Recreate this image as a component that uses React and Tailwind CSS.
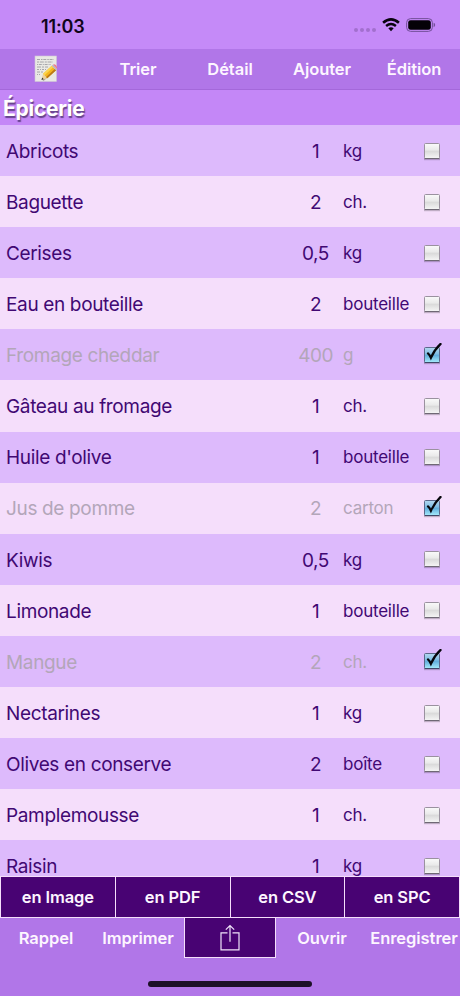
import React, { useState } from "react";

const startItems = [
  { name: "Abricots", qty: "1", unit: "kg", done: false },
  { name: "Baguette", qty: "2", unit: "ch.", done: false },
  { name: "Cerises", qty: "0,5", unit: "kg", done: false },
  { name: "Eau en bouteille", qty: "2", unit: "bouteille", done: false },
  { name: "Fromage cheddar", qty: "400", unit: "g", done: true },
  { name: "Gâteau au fromage", qty: "1", unit: "ch.", done: false },
  { name: "Huile d'olive", qty: "1", unit: "bouteille", done: false },
  { name: "Jus de pomme", qty: "2", unit: "carton", done: true },
  { name: "Kiwis", qty: "0,5", unit: "kg", done: false },
  { name: "Limonade", qty: "1", unit: "bouteille", done: false },
  { name: "Mangue", qty: "2", unit: "ch.", done: true },
  { name: "Nectarines", qty: "1", unit: "kg", done: false },
  { name: "Olives en conserve", qty: "2", unit: "boîte", done: false },
  { name: "Pamplemousse", qty: "1", unit: "ch.", done: false },
  { name: "Raisin", qty: "1", unit: "kg", done: false },
];

const NoteIcon = () => (
  <svg width="24" height="28" viewBox="0 0 24 28" fill="none">
    <rect x="1" y="1" width="21.5" height="25.5" fill="#e9e9e4" stroke="#cfc6d6" strokeWidth="0.6" />
    <g stroke="#96969a" strokeWidth="0.8">
      <path d="M3 4.5h17" strokeDasharray="3 1 1.5 .8" />
      <path d="M3 7h16" strokeDasharray="2 .8 4 1" />
      <path d="M3 9.5h14" strokeDasharray="1 .8 3 1" />
      <path d="M3 12h11" strokeDasharray="4 1 2 1" />
      <path d="M3 14.5h9" strokeDasharray="2 1 1 1" />
      <path d="M3 17h6" strokeDasharray="3 1" />
      <path d="M3 19.5h4" strokeDasharray="1 1" />
    </g>
    <path d="M9 25.5l13-11" stroke="#a9a59c" strokeWidth="1.5" />
    <path d="M7.5 25l1.6-6.2 4.2 4.5z" fill="#ecd09a" />
    <path d="M7.5 25l.7-2.4 1.6 1.6z" fill="#333" />
    <path d="M9.1 18.8L17.8 10.8l4.2 4.4-8.7 8.1z" fill="#f4b51d" />
    <path d="M9.1 18.8L17.8 10.8l1.4 1.5-8.7 8z" fill="#fbd551" />
    <path d="M12.2 22.1l8.6-8.1 1.2 1.2-8.7 8.1z" fill="#ba7818" />
    <path d="M17.8 10.8l1.3-1.2 4.1 4.4-1.2 1.2z" fill="#bcb8bf" />
    <path d="M19.1 9.6q1.2-1 2.7.4t1.4 4z" fill="#f0788b" />
  </svg>
);

const WifiIcon = () => (
  <svg width="18" height="14" viewBox="0 0 18 14" fill="none" stroke="#08030d">
    <path d="M1.1 4.8Q9-2 16.9 4.8" strokeWidth="2.6" />
    <path d="M4.1 8Q9 3.8 13.9 8" strokeWidth="2.4" />
    <path d="M6.3 10.3Q9 8 11.7 10.3L9 13.2z" fill="#08030d" stroke="none" />
  </svg>
);

const BatteryIcon = () => (
  <svg width="30" height="14" viewBox="0 0 30 14">
    <rect x="0.6" y="0.6" width="25.8" height="12.8" rx="4" fill="none" stroke="#74509a" />
    <rect x="2.2" y="2.2" width="22.6" height="9.6" rx="2.4" fill="#050208" />
    <path d="M27.6 4.8q1.6.6 1.6 2.2t-1.6 2.2z" fill="#74509a" />
  </svg>
);

const ShareIcon = () => (
  <svg width="20" height="27" viewBox="0 0 20 27" fill="none" stroke="#efe4fa" strokeWidth="1.2">
    <path d="M7.5 8.9H1v16.9h18V8.9h-6.5" />
    <path d="M10 17.8V1.8M5.8 5.6L10 1.5l4.2 4.1" />
  </svg>
);

const Checkbox = ({ checked }) => (
  <svg width="20" height="22" viewBox="0 0 20 22" fill="none">
    <defs>
      <linearGradient id="boxOff" x1="0" y1="0" x2="0" y2="1">
        <stop offset="0" stopColor="#fafafa" />
        <stop offset="0.45" stopColor="#e9e9e9" />
        <stop offset="0.5" stopColor="#d9d9d9" />
        <stop offset="1" stopColor="#f6f6f6" />
      </linearGradient>
      <linearGradient id="boxOn" x1="0" y1="0" x2="0" y2="1">
        <stop offset="0" stopColor="#b4d8f0" />
        <stop offset="0.45" stopColor="#7dbbe3" />
        <stop offset="0.5" stopColor="#5fabdb" />
        <stop offset="1" stopColor="#a6ebfb" />
      </linearGradient>
    </defs>
    <path d="M2 20.5h16" stroke="#000" strokeOpacity="0.22" strokeWidth="1.4" />
    <rect
      x="2.5"
      y="4.5"
      width="15"
      height="15"
      rx="1"
      fill={checked ? "url(#boxOn)" : "url(#boxOff)"}
      stroke={checked ? "#5b6789" : "#9a919f"}
    />
    <path d="M2.5 19.5h15" stroke={checked ? "#3f4668" : "#6f6875"} />
    {checked && (
      <path d="M6 10.4q1.5 1.2 2.9 4.4Q12.4 6.8 18.6 0.9" stroke="#06060c" strokeWidth="2.2" strokeLinecap="round" />
    )}
  </svg>
);

const StatusBar = () => (
  <div className="flex h-[49px] items-center justify-between bg-[#c58af8] pl-[41px] pr-[24px] pt-[2px]">
    <span className="pt-px text-[18px] font-semibold tracking-[-0.15px] text-[#10041a]">11:03</span>
    <div className="flex items-center pb-px">
      <div className="mr-[6px] mt-[9px] flex gap-[2px]">
        <span className="h-[4px] w-[4px] rounded-full bg-[#a26fce]" />
        <span className="h-[4px] w-[4px] rounded-full bg-[#a26fce]" />
        <span className="h-[4px] w-[4px] rounded-full bg-[#a26fce]" />
        <span className="h-[4px] w-[4px] rounded-full bg-[#a26fce]" />
      </div>
      <WifiIcon />
      <div className="ml-[6px]">
        <BatteryIcon />
      </div>
    </div>
  </div>
);

const Row = ({ item, onToggle }) => (
  <li
    className={`flex h-[51.1px] shrink-0 items-center pl-[6px] odd:bg-[#ddbafc] even:bg-[#f5defb] ${
      item.done ? "text-[#b3a6b9]" : "text-[#410873]"
    }`}
  >
    <span className="w-[284px] pt-[3px] text-[19px] tracking-[-0.35px]">{item.name}</span>
    <span className="w-[51px] pt-[3px] text-center text-[19px] tracking-[-0.5px]">{item.qty}</span>
    <span className="ml-[2px] w-[79px] whitespace-nowrap pt-[2px] text-[17px] tracking-[-0.22px]">{item.unit}</span>
    <button onClick={onToggle} className="-mt-[2px]">
      <Checkbox checked={item.done} />
    </button>
  </li>
);

const App = () => {
  const [items, setItems] = useState(startItems);

  const toggle = (index) => {
    setItems(items.map((item, i) => (i === index ? { ...item, done: !item.done } : item)));
  };

  return (
    <div className="flex h-[996px] w-[460px] flex-col overflow-hidden bg-[#b176e8] font-['Inter',sans-serif]">
      <StatusBar />

      {/* Top toolbar */}
      <nav className="grid h-[41px] shrink-0 grid-cols-5 items-center border-b border-[#a468da] bg-[#b176e8] text-center text-[16.5px] font-semibold tracking-[-0.05px] text-[#fdf5ff]">
        <button className="flex justify-center">
          <NoteIcon />
        </button>
        <button>Trier</button>
        <button>Détail</button>
        <button>Ajouter</button>
        <button>Édition</button>
      </nav>

      <h1 className="h-[35px] shrink-0 bg-[#c487f7] pl-[3px] text-[21px] font-bold leading-[37px] tracking-[-0.25px] text-white [text-shadow:1px_1.5px_1px_#65438c]">
        Épicerie
      </h1>

      <ul className="flex h-[751px] shrink-0 flex-col overflow-hidden">
        {items.map((item, i) => (
          <Row key={item.name} item={item} onToggle={() => toggle(i)} />
        ))}
      </ul>

      {/* Export formats */}
      <div className="grid h-[42px] shrink-0 grid-cols-4 gap-px border border-[#f5defb] bg-[#f5defb] text-[16.5px] font-semibold tracking-[-0.1px] text-[#fdf5ff]">
        <button className="bg-[#480373]">en Image</button>
        <button className="bg-[#480373]">en PDF</button>
        <button className="bg-[#480373]">en CSV</button>
        <button className="bg-[#480373]">en SPC</button>
      </div>

      <nav className="grid h-[40px] shrink-0 grid-cols-5 text-[16.5px] font-semibold tracking-[-0.05px] text-[#fdf5ff]">
        <button>Rappel</button>
        <button>Imprimer</button>
        <button className="flex items-center justify-center border border-t-0 border-[#f5defb] bg-[#480373]">
          <ShareIcon />
        </button>
        <button>Ouvrir</button>
        <button>Enregistrer</button>
      </nav>

      <div className="mx-auto mt-[23px] h-[6px] w-[164px] rounded-full bg-[#1d1028]" />
    </div>
  );
};

export default App;
